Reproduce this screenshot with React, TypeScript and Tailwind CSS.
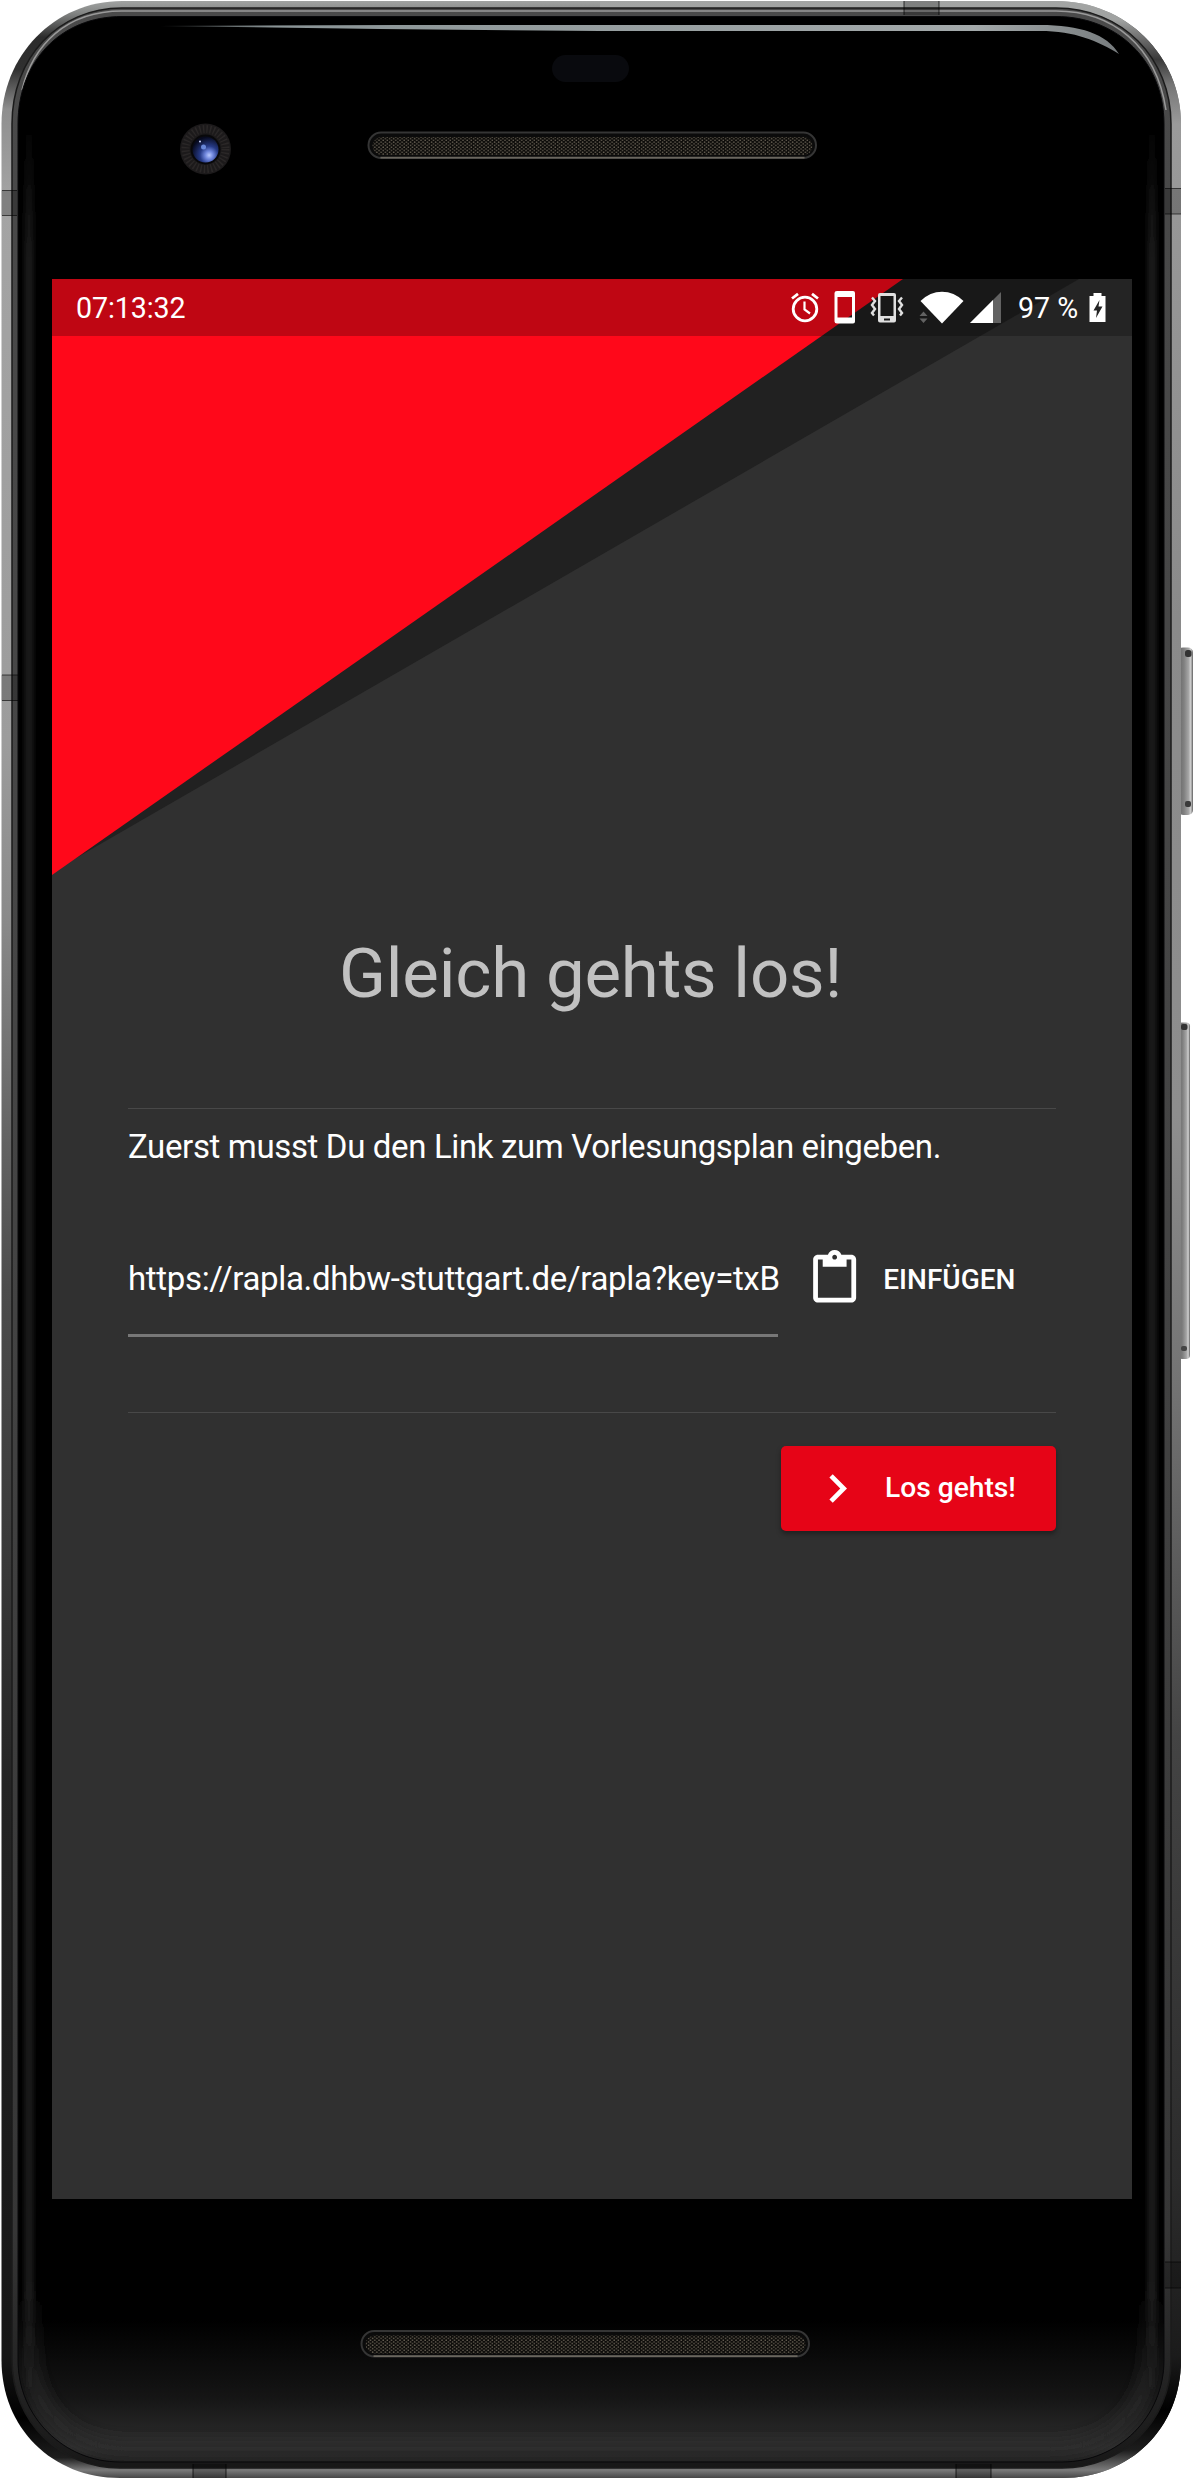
import React from 'react';

const FRAME =
  'M122 1H1056C1126 1 1181 56 1181 124V2360C1181 2428 1130 2478 1062 2478H120C52 2478 1.500 2428 1.500 2360V124C1.500 56 54 1 122 1Z';
const RIM =
  'M122 8H1056C1122 8 1171 58 1171 124V2360C1171 2422 1122 2468 1062 2468H120C60 2468 12 2422 12 2360V124C12 58 58 8 122 8Z';
const GLASS =
  'M122 16.500H1056C1118 16.500 1164 62 1164 124V2360C1164 2417 1118 2462 1062 2462H120C64 2462 18 2417 18 2360V124C18 62 60 16.500 122 16.500Z';

/* Metal case, glass and antenna bands of the handset. */
function Handset() {
  return (
    <svg className="absolute inset-0" width="1194" height="2480" viewBox="0 0 1194 2480" aria-hidden="true">
      <defs>
        <linearGradient id="metal" x1="0" y1="0" x2="0" y2="2480" gradientUnits="userSpaceOnUse">
          <stop offset="0" stopColor="#a3a5a4" />
          <stop offset=".005" stopColor="#858786" />
          <stop offset=".015" stopColor="#2c2c2c" />
          <stop offset=".028" stopColor="#303030" />
          <stop offset=".044" stopColor="#8f8f8f" />
          <stop offset=".08" stopColor="#a4a4a4" />
          <stop offset=".3" stopColor="#9c9c9c" />
          <stop offset=".37" stopColor="#8a8a8a" />
          <stop offset=".46" stopColor="#636363" />
          <stop offset=".52" stopColor="#4c4c4c" />
          <stop offset=".62" stopColor="#3a3a3a" />
          <stop offset=".72" stopColor="#242424" />
          <stop offset=".88" stopColor="#1a1a1a" />
          <stop offset=".95" stopColor="#161616" />
          <stop offset=".975" stopColor="#000000" />
          <stop offset=".991" stopColor="#1d1d1d" />
          <stop offset=".996" stopColor="#7a7a7a" />
          <stop offset="1" stopColor="#3a3a3a" />
        </linearGradient>
        <linearGradient id="metalRight" x1="0" y1="0" x2="0" y2="2480" gradientUnits="userSpaceOnUse">
          <stop offset="0" stopColor="#a3a5a4" />
          <stop offset=".008" stopColor="#a0a2a1" />
          <stop offset=".016" stopColor="#6a6a6a" />
          <stop offset=".024" stopColor="#3a3a3a" />
          <stop offset=".034" stopColor="#757575" />
          <stop offset=".05" stopColor="#9a9a9a" />
          <stop offset=".25" stopColor="#8a8a8a" />
          <stop offset=".45" stopColor="#8e8e8e" />
          <stop offset=".56" stopColor="#737373" />
          <stop offset=".7" stopColor="#444444" />
          <stop offset=".88" stopColor="#2b2b2b" />
          <stop offset=".95" stopColor="#1b1b1b" />
          <stop offset=".972" stopColor="#000000" />
          <stop offset=".988" stopColor="#1d1d1d" />
          <stop offset=".996" stopColor="#7a7a7a" />
          <stop offset="1" stopColor="#3a3a3a" />
        </linearGradient>
        <linearGradient id="rim" x1="0" y1="0" x2="0" y2="2480" gradientUnits="userSpaceOnUse">
          <stop offset="0" stopColor="#4a4a4a" />
          <stop offset=".5" stopColor="#444" />
          <stop offset=".9" stopColor="#363636" />
          <stop offset="1" stopColor="#161616" />
        </linearGradient>
        <linearGradient id="floor" x1="0" y1="2320" x2="0" y2="2462" gradientUnits="userSpaceOnUse">
          <stop offset="0" stopColor="#000" />
          <stop offset=".55" stopColor="#151515" />
          <stop offset=".9" stopColor="#2e2e2e" />
          <stop offset="1" stopColor="#1e1e1e" />
        </linearGradient>
        <linearGradient id="edge" x1="0" y1="120" x2="0" y2="2400" gradientUnits="userSpaceOnUse">
          <stop offset="0" stopColor="#272727" stopOpacity="0" />
          <stop offset=".06" stopColor="#272727" />
          <stop offset=".95" stopColor="#272727" />
          <stop offset="1" stopColor="#272727" stopOpacity="0" />
        </linearGradient>
        <linearGradient id="glow" x1="0" y1="2270" x2="0" y2="2400" gradientUnits="userSpaceOnUse">
          <stop offset="0" stopColor="#2a2a2a" stopOpacity="0" />
          <stop offset="1" stopColor="#2a2a2a" />
        </linearGradient>
        <linearGradient id="sheen" x1="160" y1="0" x2="1118" y2="0" gradientUnits="userSpaceOnUse">
          <stop offset="0" stopColor="#8a9496" stopOpacity=".3" />
          <stop offset=".12" stopColor="#8a9496" />
          <stop offset=".85" stopColor="#a3a9aa" />
          <stop offset="1" stopColor="#777c7e" />
        </linearGradient>
        <linearGradient id="key" x1="0" y1="0" x2="1" y2="0">
          <stop offset="0" stopColor="#666" />
          <stop offset=".4" stopColor="#808080" />
          <stop offset=".7" stopColor="#a5a5a5" />
          <stop offset=".85" stopColor="#d0d0d0" />
          <stop offset="1" stopColor="#5e5e5e" />
        </linearGradient>
        <radialGradient id="lens" cx=".64" cy=".72" r=".7">
          <stop offset="0" stopColor="#b9c9ff" />
          <stop offset=".22" stopColor="#6f86dc" />
          <stop offset=".5" stopColor="#263a86" />
          <stop offset="1" stopColor="#070a1e" />
        </radialGradient>
        <pattern id="mesh" width="4.200" height="3.400" patternUnits="userSpaceOnUse">
          <rect width="4.200" height="3.400" fill="#0c0b09" />
          <circle cx="1" cy="1" r=".8" fill="#6b6457" />
          <circle cx="3.100" cy="2.700" r=".8" fill="#6b6457" />
        </pattern>
        <filter id="soft" x="-200%" width="500%" y="-5%" height="110%">
          <feGaussianBlur stdDeviation="3" />
        </filter>
        <filter id="wide">
          <feGaussianBlur stdDeviation="8" />
        </filter>
        <clipPath id="glassClip">
          <path d={GLASS} />
        </clipPath>
        <clipPath id="rightHalf">
          <rect x="600" y="0" width="594" height="2480" />
        </clipPath>
      </defs>

      <rect x="1178" y="647.500" width="15" height="167.500" rx="5" fill="url(#key)" />
      <rect x="1185" y="650" width="6.500" height="7" rx="2.500" fill="#333" />
      <rect x="1185" y="801" width="6" height="6" rx="2" fill="#3a3a3a" />
      <rect x="1178" y="1022.500" width="12" height="336.500" rx="4" fill="url(#key)" />
      <rect x="1181" y="1024" width="6.500" height="6" rx="2" fill="#333" />
      <rect x="1181" y="1346" width="6" height="5" rx="2" fill="#444" />

      <path d={FRAME} fill="url(#metal)" />
      <path d={FRAME} fill="url(#metalRight)" clipPath="url(#rightHalf)" />
      <path d={RIM} fill="url(#rim)" stroke="#1b1b1b" strokeWidth="1.500" />
      <path d="M22 90C33 45 66 11 122 11H1056C1112 11 1156 45 1166 110" fill="none" stroke="#9a9a9a" strokeWidth="1.500" />
      <path d={GLASS} fill="#000" />
      <g clipPath="url(#glassClip)">
        <rect x="18" y="2320" width="1146" height="142" fill="url(#floor)" />
        <path
          d="M30 2270V2350C30 2410 68 2447 125 2449H1055C1112 2447 1150 2410 1151 2350V2270"
          fill="none"
          stroke="url(#glow)"
          strokeWidth="13"
          filter="url(#wide)"
        />
        <rect x="26" y="120" width="6" height="2280" fill="url(#edge)" filter="url(#soft)" />
        <rect x="1149" y="120" width="6" height="2280" fill="url(#edge)" filter="url(#soft)" />
      </g>
      <path d={GLASS} fill="none" stroke="#08080a" strokeWidth="1" />

      <g fill="#000" fillOpacity=".22">
        <path d="M1.500 190.500H17V215.500H1.500Z" />
        <path d="M1.500 675H18V700.500H1.500Z" />
        <path d="M1165 188.500H1181V214H1165Z" />
        <path d="M1165 2262H1181V2288H1165Z" />
        <path d="M904 1H939V15H904Z" />
        <path d="M193 2464H226V2478H193Z" />
        <path d="M956 2464H991V2478H956Z" />
      </g>
      <path
        d="M2 190.500H17M2 215.500H17M2 675H18M2 700.500H18M1165 188.500H1181M1165 214H1181M1165 2262H1181M1165 2288H1181M904 1V15M939 1V15M193 2464V2478M226 2464V2478M956 2464V2478M991 2464V2478"
        stroke="#000"
        strokeOpacity=".6"
        strokeWidth="1.200"
      />

      <path d="M160 26L400 25H1040C1080 25 1107 34 1119 54C1098 41 1075 31 1040 31H600L380 29Z" fill="url(#sheen)" />
      <rect x="552" y="55" width="77" height="27" rx="13.500" fill="#090a0e" />

      <circle cx="205.500" cy="149" r="25.500" fill="#1c1a1b" />
      <circle cx="205.500" cy="149" r="20" fill="none" stroke="#2a2727" strokeWidth="8" strokeDasharray="1.500 2" />
      <circle cx="205.500" cy="149.500" r="15" fill="#08080a" />
      <circle cx="205.500" cy="149.500" r="13" fill="url(#lens)" />
      <circle cx="203.500" cy="147" r="2.500" fill="#7b9cf0" opacity=".8" />
      <circle cx="200" cy="141.500" r="1" fill="#cbd6ff" />

      {[
        { x: 368.5, y: 132.5 },
        { x: 361.5, y: 2331 },
      ].map((s) => (
        <g key={s.y}>
          <rect x={s.x} y={s.y} width="447.500" height="25.500" rx="12.700" fill="#0b0b0b" stroke="#353535" strokeWidth="2" />
          <rect x={s.x + 4} y={s.y + 4.5} width="440" height="18" rx="9" fill="url(#mesh)" />
          <path d={`M${s.x + 12} ${s.y + 25.2}H${s.x + 436}`} stroke="#6a665e" strokeWidth="1.800" />
        </g>
      ))}
    </svg>
  );
}

function StatusBar() {
  return (
    <div className="relative flex h-[57px] items-start bg-black/25 pl-6 text-[28.6px] leading-[59px] text-white">
      <span className="w-[714px] tracking-[-0.1px]">07:13:32</span>
      <svg className="mt-[13px] shrink-0" width="30" height="31" viewBox="0 0 30 31" fill="none" stroke="#fff" strokeWidth="2.800">
        <circle cx="15" cy="17" r="11.800" />
        <path d="M14.500 9.500V17.500L20 21.500" strokeWidth="2.200" />
        <path d="M2 6.500L8 1.800M28 6.500L22 1.800" />
      </svg>
      <svg className="ml-[14px] mt-3 shrink-0" width="22" height="33" viewBox="0 0 22 33">
        <path fillRule="evenodd" fill="#fff" d="M3 0H19Q21 0 21 2V30.500Q21 32.500 19 32.500H3Q0.500 32.500 0.500 30.500V2Q0.500 0 3 0ZM3.500 6V26.500H18V6Z" />
      </svg>
      <svg className="ml-[14px] mt-[13px] shrink-0" width="34" height="31" viewBox="0 0 34 31" fill="none" stroke="#e0e0e0" strokeWidth="2.400">
        <path fillRule="evenodd" fill="#e0e0e0" stroke="none" d="M10 1H24Q26 1 26 3V28.500Q26 30.500 24 30.500H10Q8 30.500 8 28.500V3Q8 1 10 1ZM10.500 4V24H23.500V4ZM14 26.500V28.500H20V26.500Z" />
        <path d="M2 5.500L5 9L2 13L5 17L2 21L4 23.500M32 5.500L29 9L32 13L29 17L32 21L30 23.500" />
      </svg>
      <svg className="ml-[15px] mt-3 shrink-0" width="45" height="33" viewBox="0 0 45 33">
        <path d="M.5 25L4.500 20.500L8.500 25ZM.5 27.500L4.500 32L8.500 27.500Z" fill="#626262" />
        <path d="M1.500 10Q11 .8 23 .8T44.500 10L23 32.500Z" fill="#fff" />
      </svg>
      <svg className="ml-[6px] mt-3 shrink-0" width="32" height="33" viewBox="0 0 32 33">
        <path d="M31 1V32H0Z" fill="#626262" />
        <path d="M23 9V32H0Z" fill="#fff" />
      </svg>
      <span className="ml-4 w-[71px] whitespace-nowrap">97 %</span>
      <svg className="mt-[13px] shrink-0" width="17" height="31" viewBox="0 0 17 31">
        <path fillRule="evenodd" fill="#fff" d="M4.500 1H12.500V4H16.500V30H0.500V4H4.500ZM10.500 8L4.500 18.500H8L7 26L13.500 14.500H9.500Z" />
      </svg>
    </div>
  );
}

export default function App() {
  return (
    <div className="relative h-[2480px] w-[1194px] overflow-hidden bg-white font-['Roboto',sans-serif]">
      <Handset />
      <div className="pt-[279px] pl-[52px]">
        <main className="relative flex h-[1920px] w-[1080px] flex-col bg-[#303030]">
          <svg className="absolute top-0 left-0" width="1080" height="600" viewBox="0 0 1080 600" aria-hidden="true">
            <path d="M0 0H1027L0 593Z" fill="#212121" />
            <path d="M0 0H851L0 596Z" fill="#ff081a" />
          </svg>
          <StatusBar />
          <section className="relative mt-[596px] flex flex-col px-[76px] text-white">
            <h1 className="pr-[3px] text-center text-[69px] leading-[84px] tracking-[-0.2px] text-[#c1c1c1]">Gleich gehts los!</h1>
            <div className="mt-[92px] h-px bg-[#484848]" />
            <p className="mt-[18px] text-[33px] leading-10 tracking-[-0.36px] whitespace-nowrap">
              Zuerst musst Du den Link zum Vorlesungsplan eingeben.
            </p>
            <div className="mt-[82px] flex h-[88px] items-start">
              <div className="h-[88px] w-[650px] border-b-[3px] border-[#777] pt-2.5 text-[33px] leading-10 tracking-[-0.34px] whitespace-nowrap">
                https://rapla.dhbw-stuttgart.de/rapla?key=txB
              </div>
              <button className="ml-7 flex items-center pt-px text-[28px] leading-10 font-medium">
                <svg className="mr-5" width="57.300" height="57.300" viewBox="0 0 24 24" fill="#fff">
                  <path d="M19 2h-4.180C14.400.84 13.300 0 12 0S9.600.84 9.180 2H5c-1.100 0-2 .9-2 2v16c0 1.100.9 2 2 2h14c1.100 0 2-.9 2-2V4c0-1.100-.9-2-2-2zm-7 0c.55 0 1 .45 1 1s-.45 1-1 1-1-.45-1-1 .45-1 1-1zm7 18H5V4h2v3h10V4h2v16z" />
                </svg>
                <span className="pt-0.5">EINFÜGEN</span>
              </button>
            </div>
            <div className="mt-[75px] h-px bg-[#484848]" />
            <button className="mt-[33px] flex h-[85px] w-[275px] items-center self-end rounded-[5px] bg-[#e60417] pl-7 text-[28.2px] font-medium shadow-[0_3px_5px_rgba(0,0,0,0.35)]">
              <svg className="mr-[19px]" width="57" height="57" viewBox="0 0 24 24" fill="#fff">
                <path d="M10 6L8.590 7.410 13.170 12l-4.580 4.590L10 18l6-6z" />
              </svg>
              Los gehts!
            </button>
          </section>
        </main>
      </div>
    </div>
  );
}
